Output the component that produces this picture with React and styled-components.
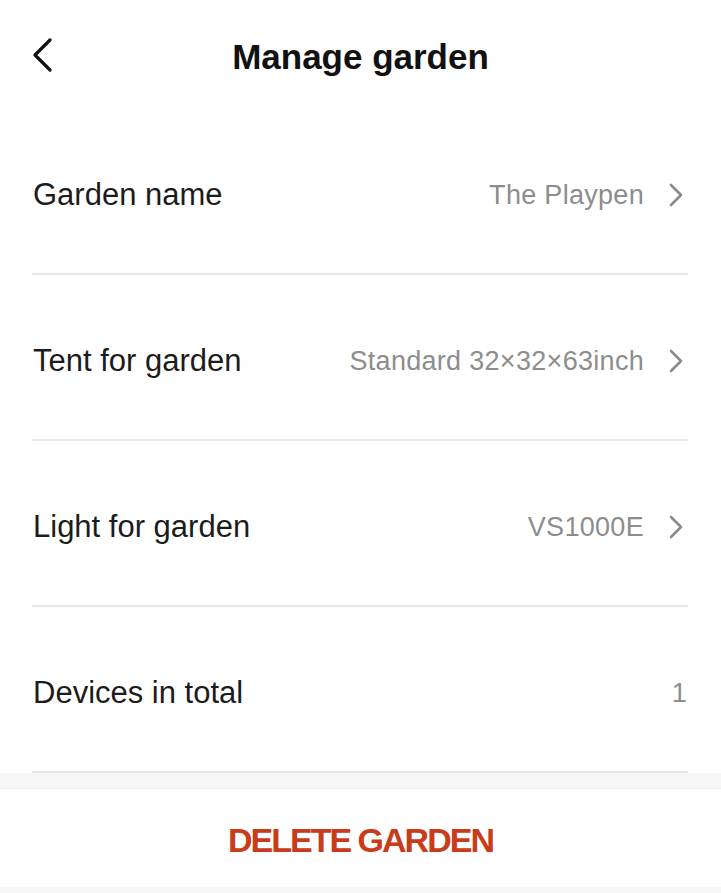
import React from 'react';
import styled, { createGlobalStyle } from 'styled-components';

const GlobalStyle = createGlobalStyle`
  html, body {
    margin: 0;
    padding: 0;
    background: #f6f6f6;
    font-family: "Liberation Sans", Arial, sans-serif;
  }
  * { box-sizing: border-box; }
`;

const Page = styled.div`
  width: 721px;
  height: 893px;
  display: flex;
  flex-direction: column;
  background: #f6f6f6;
  overflow: hidden;
`;

const Content = styled.div`
  background: #fff;
`;

// Top bar with back arrow and centered title
const Header = styled.header`
  height: 109px;
  display: grid;
  grid-template-columns: 80px 1fr 80px;
  align-items: center;
  padding-bottom: 4px;
`;

const BackButton = styled.button`
  border: none;
  background: none;
  padding: 5px 0 0 31px;
  display: flex;
  align-items: center;
  cursor: pointer;
`;

const Title = styled.h1`
  margin: 0;
  padding-top: 8px;
  text-align: center;
  font-size: 35px;
  font-weight: 700;
  color: #111;
`;

const List = styled.div`
  display: flex;
  flex-direction: column;
  padding: 0 33px 0 32px;
`;

const Row = styled.div`
  height: 166px;
  display: flex;
  align-items: center;
  justify-content: space-between;
  padding: 8px 1px 0 1px;
  border-bottom: 2px solid #e7e7e7;
  cursor: ${(p) => (p.clickable ? 'pointer' : 'default')};
`;

const Label = styled.span`
  font-size: 31px;
  color: #1c1c1c;
`;

const Right = styled.div`
  display: flex;
  align-items: center;
  gap: 25px;
`;

const Value = styled.span`
  font-size: 27px;
  color: #8d8d8d;
  letter-spacing: 0.3px;
`;

const Arrow = styled.svg`
  margin-right: 4px;
`;

const Spacer = styled.div`
  height: 15px;
  background: #f6f6f6;
`;

const BottomBar = styled.div`
  height: 99px;
  background: #fff;
  border-top: 1px solid #ececec;
  display: flex;
  align-items: center;
  justify-content: center;
  padding-top: 4px;
`;

const DeleteButton = styled.button`
  border: none;
  background: none;
  font-family: "Liberation Sans", Arial, sans-serif;
  font-size: 34px;
  font-weight: 700;
  color: #c83b1b;
  letter-spacing: -2px;
  cursor: pointer;
  padding: 0;
`;

const ChevronLeft = () => (
  <svg width="22" height="34" viewBox="0 0 22 34" fill="none">
    <path d="M19 2 L4 17 L19 32" stroke="#111" strokeWidth="3.2" strokeLinecap="round" strokeLinejoin="round" />
  </svg>
);

const ChevronRight = () => (
  <Arrow width="14" height="24" viewBox="0 0 14 24" fill="none">
    <path d="M2 2 L12 12 L2 22" stroke="#8a8a8a" strokeWidth="2.6" strokeLinecap="round" strokeLinejoin="round" />
  </Arrow>
);

const ROWS = [
  { label: 'Garden name', value: 'The Playpen', link: true },
  { label: 'Tent for garden', value: 'Standard 32×32×63inch', link: true },
  { label: 'Light for garden', value: 'VS1000E', link: true },
  { label: 'Devices in total', value: '1', link: false },
];

export default function App() {
  return (
    <>
      <GlobalStyle />
      <Page>
        <Content>
          <Header>
            <BackButton aria-label="Back">
              <ChevronLeft />
            </BackButton>
            <Title>Manage garden</Title>
            <div />
          </Header>
          <List>
            {ROWS.map((row) => (
              <Row key={row.label} clickable={row.link}>
                <Label>{row.label}</Label>
                <Right>
                  <Value>{row.value}</Value>
                  {row.link && <ChevronRight />}
                </Right>
              </Row>
            ))}
          </List>
        </Content>
        <Spacer />
        <BottomBar>
          <DeleteButton>DELETE GARDEN</DeleteButton>
        </BottomBar>
      </Page>
    </>
  );
}
